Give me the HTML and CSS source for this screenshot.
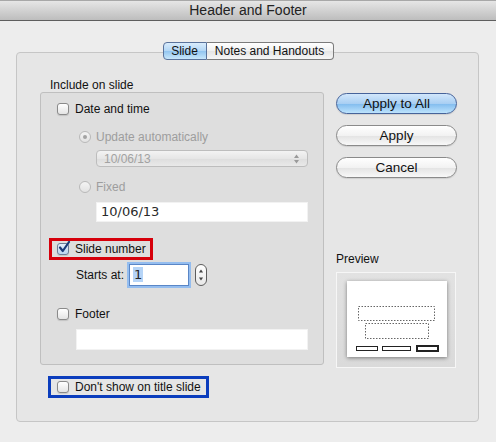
FILE: index.html
```html
<!DOCTYPE html>
<html lang="en">
<head>
	<meta charset="UTF-8">
	<title>Header and Footer</title>
	<link rel="stylesheet" href="styles.css">
</head>
<body>
	<div class="window">
		<div class="titlebar">Header and Footer</div>
		<div class="content">
			<div class="tabs">
				<span class="tab tab-slide on">Slide</span><span class="tab tab-notes">Notes and Handouts</span>
			</div>
			<div class="tabbox">
				<div class="cols">
					<div class="left">
						<div class="caption">Include on slide</div>
						<div class="group">
							<div class="check row-date"><span class="box"></span>Date and time</div>
							<div class="radio dim row-auto"><span class="dot on"></span>Update automatically</div>
							<div class="popup">
								<span>10/06/13</span>
								<svg width="7" height="10" viewBox="0 0 7 10"><path d="M3.5 0.5 L6 4 L1 4 Z M3.5 9.5 L6 6 L1 6 Z" fill="#9a9a9a"/></svg>
							</div>
							<div class="radio dim row-fixed"><span class="dot"></span>Fixed</div>
							<div class="field field-date">10/06/13</div>
							<div class="check row-num mark-red">
								<span class="box checked">
									<svg class="tick" width="14" height="14" viewBox="0 0 14 14"><path d="M3 6.5 L5.8 10 L12 1" fill="none" stroke="#1b3a78" stroke-width="2.2" stroke-linecap="round" stroke-linejoin="round"/></svg>
								</span>Slide number
							</div>
							<div class="starts">
								<span class="starts-label">Starts at:</span>
								<div class="field field-num"><span class="sel">1</span></div>
								<span class="stepper">
									<svg width="12" height="22" viewBox="0 0 12 22"><path d="M6 4.5 L8.5 8 L3.5 8 Z M6 17.5 L8.5 14 L3.5 14 Z" fill="#444"/></svg>
								</span>
							</div>
							<div class="check row-footer"><span class="box"></span>Footer</div>
							<div class="field field-footer"></div>
						</div>
					</div>
					<div class="right">
						<div class="btn default">Apply to All</div>
						<div class="btn">Apply</div>
						<div class="btn">Cancel</div>
						<div class="preview-label">Preview</div>
						<div class="well">
							<svg class="slide" width="100" height="76" viewBox="0 0 100 76">
								<rect x="0" y="0" width="100" height="76" fill="#fff"/>
								<rect x="11.5" y="25.5" width="76" height="14" fill="none" stroke="#666" stroke-dasharray="1.5 1.5"/>
								<rect x="18.5" y="42.5" width="63" height="15" fill="none" stroke="#666" stroke-dasharray="1.5 1.5"/>
								<rect x="9.5" y="65.5" width="21" height="4" fill="none" stroke="#222"/>
								<rect x="35.5" y="65.5" width="28" height="4" fill="none" stroke="#222"/>
								<rect x="70" y="65" width="21" height="5" fill="none" stroke="#222" stroke-width="2"/>
							</svg>
						</div>
					</div>
				</div>
				<div class="check row-title mark-blue"><span class="box"></span>Don't show on title slide</div>
			</div>
		</div>
	</div>
</body>
</html>
```

FILE: styles.css
```css
*{
	margin: 0;
	padding: 0;
	box-sizing: border-box;
}
body{
	background: #ededed;
	font-family: "Liberation Sans", Arial, sans-serif;
	font-size: 12px;
	color: #111;
}
.window{
	width: 496px;
	height: 442px;
	overflow: hidden;
	background: #ededed;
}
.titlebar{
	height: 21px;
	text-align: center;
	font-size: 14px;
	color: #222;
	background: linear-gradient(#e6e6e6, #bdbdbd);
	border-top: 1px solid #a8a8a8;
	border-bottom: 1px solid #5e5e5e;
	line-height: 19px;
}
.content{
	padding-top: 21px;
}
/* tabs */
.tabs{
	display: flex;
	justify-content: center;
	position: relative;
	z-index: 1;
	margin-bottom: -8px;
}
.tab{
	height: 18px;
	line-height: 16px;
	text-align: center;
	border: 1px solid #7b7b7b;
	background: linear-gradient(#ffffff, #f0f0f0 50%, #e4e4e4 51%, #f6f6f6);
	color: #111;
}
.tab-slide{
	width: 44px;
	border-radius: 4px 0 0 4px;
}
.tab-notes{
	width: 127px;
	border-left: none;
	border-radius: 0 4px 4px 0;
}
.tab.on{
	background: linear-gradient(#d9ecfc, #b2d6f5 50%, #92c5f0 51%, #c8e7fb);
	border-color: #5a739c;
}
.tabbox{
	margin: 0 17px 0 16px;
	height: 370px;
	border: 1px solid #c6c6c6;
	border-radius: 4px;
	background: #e6e6e6;
	padding: 25px 0 0 23px;
}
.cols{
	display: grid;
	grid-template-columns: 284px 121px;
	column-gap: 12px;
	align-items: start;
}
.caption{
	margin-left: 10px;
	height: 14px;
	line-height: 14px;
}
.group{
	border: 1px solid #bfbfbf;
	border-radius: 3px;
	background: #dedede;
	padding: 0 0 14px 16px;
}
/* checkbox / radio rows */
.check, .radio{
	display: flex;
	align-items: center;
	height: 16px;
	width: fit-content;
	white-space: nowrap;
}
.box{
	position: relative;
	flex: none;
	width: 12px;
	height: 12px;
	margin-right: 6px;
	border: 1px solid #8a8a8a;
	border-radius: 3px;
	background: linear-gradient(#ffffff, #e4e4e4);
	box-shadow: 0 1px 1px rgba(0,0,0,0.12);
}
.box.checked{
	background: linear-gradient(#e4eefa, #bcd3ee);
	border-color: #6d7d96;
}
.tick{
	position: absolute;
	left: -1px;
	top: -3px;
}
.dot{
	position: relative;
	flex: none;
	width: 12px;
	height: 12px;
	margin-right: 5px;
	border: 1px solid #b9b9b9;
	border-radius: 50%;
	background: linear-gradient(#f4f4f4, #e2e2e2);
}
.dot.on::after{
	content: "";
	position: absolute;
	left: 3px;
	top: 3px;
	width: 4px;
	height: 4px;
	border-radius: 50%;
	background: #a3a3a3;
}
.dim{
	color: #9d9d9d;
}
.row-date{
	margin-top: 8px;
}
.row-auto{
	margin-top: 12px;
	margin-left: 22px;
}
.popup{
	margin: 5px 0 0 39px;
	width: 212px;
	height: 17px;
	display: flex;
	justify-content: space-between;
	align-items: center;
	padding: 0 7px 0 7px;
	border: 1px solid #bdbdbd;
	border-radius: 4px;
	background: linear-gradient(#f3f3f3, #e6e6e6 50%, #dddddd 51%, #e9e9e9);
	color: #a2a2a2;
}
.row-fixed{
	margin-top: 12px;
	margin-left: 22px;
}
.field{
	background: #fff;
	border: 1px solid #cfcfcf;
	border-top-color: #b8b8b8;
	font-family: "DejaVu Sans", sans-serif;
	font-size: 13px;
	color: #2a2a2a;
}
.field-date{
	margin: 7px 0 0 39px;
	width: 212px;
	height: 20px;
	line-height: 18px;
	padding-left: 4px;
	border-color: #f2f2f2;
}
.row-num{
	margin-top: 19px;
	margin-left: -5px;
	padding: 0 4px 0 5px;
}
.mark-red{
	outline: 3px solid #d6000b;
}
.starts{
	margin: 7px 0 0 19px;
	height: 22px;
	display: flex;
	align-items: center;
}
.starts-label{
	width: 53px;
}
.field-num{
	width: 60px;
	height: 22px;
	line-height: 20px;
	padding-left: 3px;
	border: 1px solid #5a86c6;
	box-shadow: 0 0 0 2px #94bdef;
}
.sel{
	background: #b5d4f7;
	padding: 0 1px;
}
.stepper{
	margin-left: 6px;
	width: 12px;
	height: 22px;
	border: 1px solid #5d5d5d;
	border-radius: 6px;
	background: linear-gradient(#ffffff, #e8e8e8);
	display: flex;
	align-items: center;
	justify-content: center;
	overflow: hidden;
}
.row-footer{
	margin-top: 20px;
}
.field-footer{
	margin: 7px 0 0 19px;
	width: 232px;
	height: 21px;
	border-color: #f2f2f2;
}
/* buttons */
.btn{
	height: 21px;
	margin-top: 11px;
	display: flex;
	align-items: center;
	justify-content: center;
	font-size: 13.5px;
	color: #111;
	border: 1px solid #8a8a8a;
	border-radius: 11px;
	background: linear-gradient(#ffffff, #f2f2f2 50%, #e3e3e3 51%, #f8f8f8);
	box-shadow: 0 1px 1px rgba(0,0,0,0.1);
}
.btn.default{
	margin-top: 15px;
	border-color: #46639a;
	background: linear-gradient(#d2e7fb, #a9cff3 50%, #80bbee 51%, #bde3fc);
}
.preview-label{
	margin-top: 74px;
	height: 14px;
	line-height: 14px;
}
.well{
	margin-top: 6px;
	width: 120px;
	height: 96px;
	border: 1px solid #f6f6f6;
	background: linear-gradient(#e2e2e2, #dadada);
	padding: 8px 0 0 10px;
}
.slide{
	display: block;
	box-shadow: 0 1px 4px rgba(0,0,0,0.45);
}
.row-title{
	margin: 11px 0 0 11px;
	padding: 0 5px 0 6px;
}
.mark-blue{
	outline: 3px solid #0b3dbd;
}
```
